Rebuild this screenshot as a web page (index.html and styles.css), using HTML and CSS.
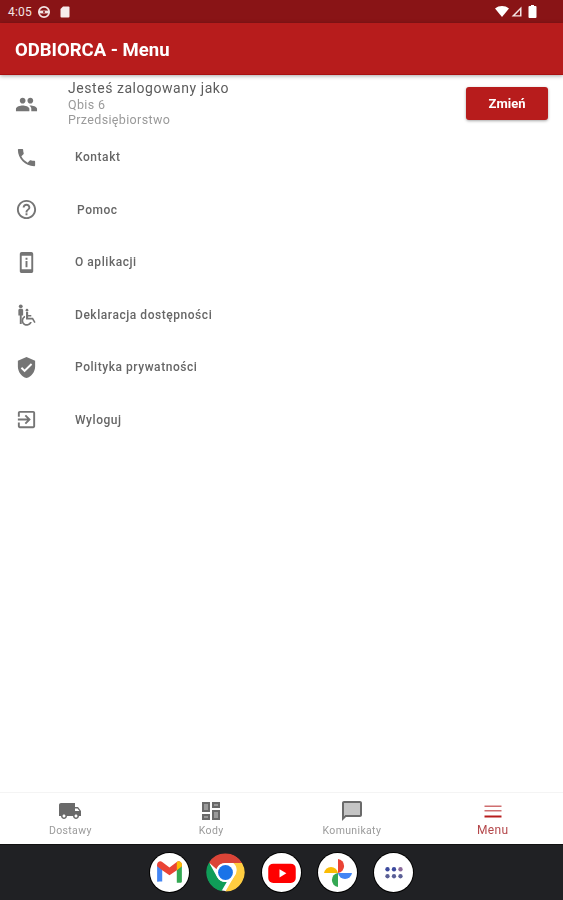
FILE: index.html
```html
<!DOCTYPE html>
<html lang="pl">
<head>
<meta charset="utf-8">
<title>ODBIORCA - Menu</title>
<link rel="stylesheet" href="styles.css">
</head>
<body>
<div class="screen">
  <div class="statusbar">
    <div class="status-left">
      <span class="clock">4:05</span>
      <svg class="st-ico" viewBox="0 0 14 14"><circle cx="7" cy="7" r="5.2" fill="none" stroke="#f3e4e4" stroke-width="1.7"/><rect x="2" y="5.6" width="10" height="2.8" fill="#f3e4e4"/><circle cx="7" cy="7" r="1" fill="#891416"/></svg>
      <svg class="st-sd" viewBox="0 0 10 12"><path d="M3 .5h5.5a1 1 0 0 1 1 1v9a1 1 0 0 1-1 1h-7a1 1 0 0 1-1-1V3z" fill="#f6ecec"/></svg>
    </div>
    <div class="status-right">
      <svg class="st-wifi" viewBox="0 0 14 11"><path d="M0 2.5C4-.8 10-.8 14 2.5L7 11z" fill="#fff"/></svg>
      <svg class="st-signal" viewBox="0 0 11 11"><path d="M10.5.5v10H.5zM9 4 4 9.2h5z" fill="#f3e4e4" fill-rule="evenodd"/></svg>
      <svg class="st-batt" viewBox="0 0 8 13"><path d="M2.500 0h3v1H7a1 1 0 0 1 1 1v10a1 1 0 0 1-1 1H1a1 1 0 0 1-1-1V2a1 1 0 0 1 1-1h1.500z" fill="#fff"/></svg>
    </div>
  </div>
  <header class="toolbar"><h1 class="title">ODBIORCA - Menu</h1></header>
  <main class="content">
    <section class="account">
      <svg class="icon account-icon" viewBox="0 0 24 24"><path d="M16 11c1.660 0 2.990-1.340 2.990-3S17.660 5 16 5s-3 1.340-3 3 1.340 3 3 3zm-8 0c1.660 0 2.990-1.340 2.990-3S9.660 5 8 5 5 6.340 5 8s1.340 3 3 3zm0 2c-2.330 0-7 1.170-7 3.500V19h14v-2.500C15 14.170 10.330 13 8 13zm8 0c-.29 0-.62.020-.97.050 1.160.84 1.970 1.970 1.970 3.450V19h6v-2.500c0-2.330-4.670-3.500-7-3.500z"/></svg>
      <div class="account-text">
        <div class="account-title">Jesteś zalogowany jako</div>
        <div class="account-sub">Qbis 6</div>
        <div class="account-sub">Przedsiębiorstwo</div>
      </div>
      <button class="change-btn">Zmień</button>
    </section>
    <nav class="menu">
      <a class="menu-item">
        <svg class="icon" viewBox="0 0 24 24"><path d="M6.620 10.790c1.440 2.830 3.760 5.140 6.590 6.590l2.200-2.200c.27-.27.67-.36 1.020-.24 1.120.37 2.330.57 3.570.57.550 0 1 .45 1 1V20c0 .55-.45 1-1 1-9.390 0-17-7.610-17-17 0-.55.450-1 1-1h3.500c.55 0 1 .45 1 1 0 1.250.2 2.450.57 3.570.11.350.03.740-.25 1.020l-2.200 2.200z"/></svg>
        <span class="menu-label">Kontakt</span>
      </a>
      <a class="menu-item">
        <svg class="icon" viewBox="0 0 24 24"><path d="M11 18h2v-2h-2v2zm1-16C6.480 2 2 6.480 2 12s4.480 10 10 10 10-4.480 10-10S17.520 2 12 2zm0 18c-4.410 0-8-3.590-8-8s3.590-8 8-8 8 3.590 8 8-3.590 8-8 8zm0-14c-2.210 0-4 1.790-4 4h2c0-1.100.9-2 2-2s2 .9 2 2c0 2-3 1.750-3 5h2c0-2.250 3-2.500 3-5 0-2.210-1.790-4-4-4z"/></svg>
        <span class="menu-label menu-label-shift">Pomoc</span>
      </a>
      <a class="menu-item">
        <svg class="icon" viewBox="0 0 24 24"><path d="M17 1H7C5.900 1 5 1.900 5 3v18c0 1.100.9 2 2 2h10c1.100 0 2-.9 2-2V3c0-1.100-.9-2-2-2zm0 18H7V5h10v14zm-6-8.500h2V17h-2zM11 7h2v2h-2z"/></svg>
        <span class="menu-label">O aplikacji</span>
      </a>
      <a class="menu-item">
        <svg class="icon" viewBox="0 0 24 24"><circle cx="6" cy="3.500" r="2"/><path d="M3.500 7.500c0-.8.7-1.500 1.500-1.500h2c.8 0 1.500.7 1.500 1.500V13H7v9H5v-9H3.500z"/><path d="M11.500 9.500h2.200v3h3.300v1.600h-3.300v1.400h5.100l2.700 4.500-1.400.8-2.200-3.700h-6.400z"/><path d="M10.500 13.300v1.800a3.700 3.700 0 1 0 5.200 4.700h1.800a5.400 5.400 0 1 1-7-6.500z"/><circle cx="12.500" cy="7.500" r="1.400"/></svg>
        <span class="menu-label">Deklaracja dostępności</span>
      </a>
      <a class="menu-item">
        <svg class="icon" viewBox="0 0 24 24"><path d="M12 1 3 5v6c0 5.550 3.840 10.740 9 12 5.160-1.260 9-6.450 9-12V5l-9-4zm-2 16-4-4 1.410-1.410L10 14.170l6.590-6.590L18 9l-8 8z"/></svg>
        <span class="menu-label">Polityka prywatności</span>
      </a>
      <a class="menu-item">
        <svg class="icon" viewBox="0 0 24 24"><path d="M10.090 15.590 11.500 17l5-5-5-5-1.410 1.410L12.670 11H3v2h9.670l-2.580 2.590zM19 3H5c-1.110 0-2 .9-2 2v4h2V5h14v14H5v-4H3v4c0 1.100.89 2 2 2h14c1.100 0 2-.9 2-2V5c0-1.100-.9-2-2-2z"/></svg>
        <span class="menu-label">Wyloguj</span>
      </a>
    </nav>
  </main>
  <nav class="tabs">
    <div class="tab">
      <svg class="tab-icon" viewBox="0 0 24 24"><path d="M20 8h-3V4H3c-1.100 0-2 .9-2 2v11h2c0 1.660 1.340 3 3 3s3-1.340 3-3h6c0 1.660 1.340 3 3 3s3-1.340 3-3h2v-5l-3-4zM6 18.500c-.83 0-1.500-.67-1.500-1.500s.67-1.500 1.500-1.500 1.500.67 1.500 1.500-.67 1.500-1.500 1.500zm13.500-9 1.960 2.500H17V9.500h2.500zm-1.500 9c-.83 0-1.500-.67-1.500-1.500s.67-1.500 1.500-1.500 1.500.67 1.500 1.500-.67 1.500-1.500 1.500z"/></svg>
      <span class="tab-label">Dostawy</span>
    </div>
    <div class="tab">
      <svg class="tab-icon" viewBox="0 0 24 24"><path d="M3 13h8V3H3v10zm0 8h8v-6H3v6zm10 0h8V11h-8v10zm0-18v6h8V3h-8z"/><path d="M5 5h4v6H5zm0 12h4v2H5zm10-4h4v6h-4zm0-8h4v2h-4z" fill="#9a9a9a"/></svg>
      <span class="tab-label">Kody</span>
    </div>
    <div class="tab">
      <svg class="tab-icon" viewBox="0 0 24 24"><path d="M4 4h16v12H5.200L4 17.200z" fill="#c4c4c4"/><path d="M20 2H4c-1.100 0-1.990.9-1.990 2L2 22l4-4h14c1.100 0 2-.9 2-2V4c0-1.100-.9-2-2-2zm0 14H5.170L4 17.170V4h16v12z"/></svg>
      <span class="tab-label">Komunikaty</span>
    </div>
    <div class="tab tab-active">
      <svg class="tab-icon" viewBox="0 0 24 24"><path d="M3.500 18.500h17v-2h-17z" fill="#b71c1c"/><path d="M3.500 12.500h17v-1.600h-17zM3.500 6.500v1.600h17V6.500z" fill="#cf6f70"/></svg>
      <span class="tab-label">Menu</span>
    </div>
  </nav>
  <footer class="dock">
    <div class="app">
      <svg viewBox="0 0 24 24" class="app-svg app-svg-gmail"><path d="M3 19.500V7l3.700 2.800v9.700H4.200A1.200 1.200 0 0 1 3 19.500z" fill="#4285f4" transform="translate(0 -1)"/><path d="M17.300 19.500V9.800L21 7v12.500c0 .5-.5 1-1.200 1h-2.500z" fill="#34a853" transform="translate(0 -1)"/><path d="M3 7.500V6.200c0-2 2.200-3 3.700-1.900L12 8.300l5.300-4c1.500-1.100 3.700 0 3.700 1.900v1.300l-3.700 2.800L12 14 6.700 10.300z" fill="#ea4335"/><path d="M17.300 4.300c1.500-1.100 3.700 0 3.700 1.900v1.300l-3.700 2.800z" fill="#fbbc04"/></svg>
    </div>
    <svg class="chrome" viewBox="4 4 40 40"><circle cx="24" cy="24" r="19" fill="#fff"/><path d="M24 4.500a19.500 19.500 0 0 1 16.900 9.750H24a9.750 9.750 0 0 0-9.200 6.500L7.100 13.800A19.500 19.500 0 0 1 24 4.500z" fill="#db4437"/><path d="M7.100 13.800 15.500 28.900a9.750 9.750 0 0 0 9.800 4.800l-5.400 9.300A19.500 19.500 0 0 1 7.100 13.800z" fill="#0f9d58"/><path d="M40.900 14.250A19.500 19.500 0 0 1 24 43.500l-.1 0 8.500-14.700a9.750 9.750 0 0 0-.4-14.550z" fill="#ffcd40"/><circle cx="24" cy="24" r="9.800" fill="#fff"/><circle cx="24" cy="24" r="7.600" fill="#1a73e8"/></svg>
    <div class="app">
      <svg viewBox="0 0 24 24" class="app-svg app-svg-yt"><rect x="1" y="4.500" width="22" height="15.500" rx="4" fill="#f00"/><path d="m10 9 5.500 3.200L10 15.500z" fill="#fff"/></svg>
    </div>
    <div class="app">
      <svg viewBox="0 0 24 24" class="app-svg app-svg-photos"><path d="M12 12V1.500a5.300 5.300 0 0 1 0 10.500z" fill="#ea4335"/><path d="M12 12h10.500a5.300 5.300 0 0 1-10.500 0z" fill="#4285f4"/><path d="M12 12v10.500a5.300 5.300 0 0 1 0-10.500z" fill="#34a853"/><path d="M12 12H1.500a5.300 5.300 0 0 1 10.500 0z" fill="#fbbc04"/></svg>
    </div>
    <div class="app">
      <svg viewBox="0 0 24 24" class="app-svg"><g fill="#3c4a9e"><circle cx="6" cy="8.500" r="2"/><circle cx="12" cy="8.500" r="2"/></g><circle cx="18" cy="8.500" r="2" fill="#8a6a9a"/><g fill="#5a5f96"><circle cx="6" cy="15" r="2"/><circle cx="12" cy="15" r="2"/><circle cx="18" cy="15" r="2"/></g></svg>
    </div>
  </footer>
</div>
</body>
</html>
```
FILE: styles.css
```css
* { box-sizing: border-box; }
html, body { margin: 0; padding: 0; }
body { font-family: Roboto, "Liberation Sans", sans-serif; background: #fff; }
.screen { width: 563px; height: 900px; display: flex; flex-direction: column; overflow: hidden; filter: blur(.45px); }

.statusbar { height: 23px; background: #891416; color: #f3e4e4; display: flex; align-items: center; justify-content: space-between; padding: 0 26px 0 8px; flex: none; }
.status-left, .status-right { display: flex; align-items: center; }
.clock { font-size: 12px; letter-spacing: .2px; }
.st-ico { width: 14px; height: 14px; margin-left: 5px; }
.st-sd { width: 10px; height: 12px; margin-left: 9px; }
.st-wifi { width: 14px; height: 11px; }
.st-signal { width: 13px; height: 11px; margin-left: 1px; }
.st-batt { width: 9px; height: 13px; margin-left: 5px; }

.toolbar { height: 52px; background: #b71c1c; border-bottom: 1px solid #a91010; box-shadow: 0 1px 4px rgba(0,0,0,.35); display: flex; align-items: center; padding: 2px 15px 0; flex: none; position: relative; }
.title { margin: 0; color: #fff; font-size: 18.500px; font-weight: 700; }

.content { flex: 1; min-height: 0; }
.icon { width: 23px; height: 23px; fill: #757575; flex: none; }

.account { display: flex; align-items: center; height: 56px; padding: 0 15px; }
.account-icon { margin-top: 2px; }
.account-text { margin-left: 30px; flex: 1; padding-top: 1px; }
.account-title { font-size: 14px; line-height: 17px; color: #5c5c5c; letter-spacing: .55px; }
.account-sub { font-size: 12.500px; line-height: 15px; color: #9a9a9a; letter-spacing: .35px; }
.change-btn { width: 82px; height: 33px; border: 0; border-radius: 3px; background: #b71c1c; color: #fff; font: 700 13px Roboto, sans-serif; box-shadow: 0 1px 3px rgba(0,0,0,.35); }

.menu { display: flex; flex-direction: column; }
.menu-item { display: flex; align-items: center; height: 52.500px; padding-left: 15px; }
.menu-label { margin-left: 37px; font-size: 12px; font-weight: 500; color: #666; letter-spacing: .55px; }
.menu-label-shift { margin-left: 39px; }

.tabs { height: 53px; flex: none; display: grid; grid-template-columns: repeat(4, 1fr); border-top: 1px solid #f4f4f4; border-bottom: 1px solid #111; background: #fff; }
.tab { display: flex; flex-direction: column; align-items: center; padding-top: 6px; }
.tab-icon { width: 24px; height: 24px; fill: #6a6a6a; }
.tab-label { font-size: 10.500px; color: #9b9b9b; letter-spacing: .35px; line-height: 14px; margin-top: 1px; }
.tab-active .tab-label { font-size: 12px; color: #b4474a; margin-top: 0; }

.dock { height: 55px; flex: none; background: #202124; display: flex; align-items: center; justify-content: center; gap: 17px; }
.app { width: 39px; height: 39px; border-radius: 50%; background: #fff; display: flex; align-items: center; justify-content: center; box-shadow: 0 0 0 1px #000; flex: none; }
.app-svg { width: 26px; height: 26px; flex: none; }
.app-svg-gmail { width: 33px; height: 33px; }
.app-svg-yt { width: 30px; height: 30px; }
.app-svg-photos { width: 32px; height: 32px; }
.chrome { width: 39px; height: 39px; flex: none; }
```
